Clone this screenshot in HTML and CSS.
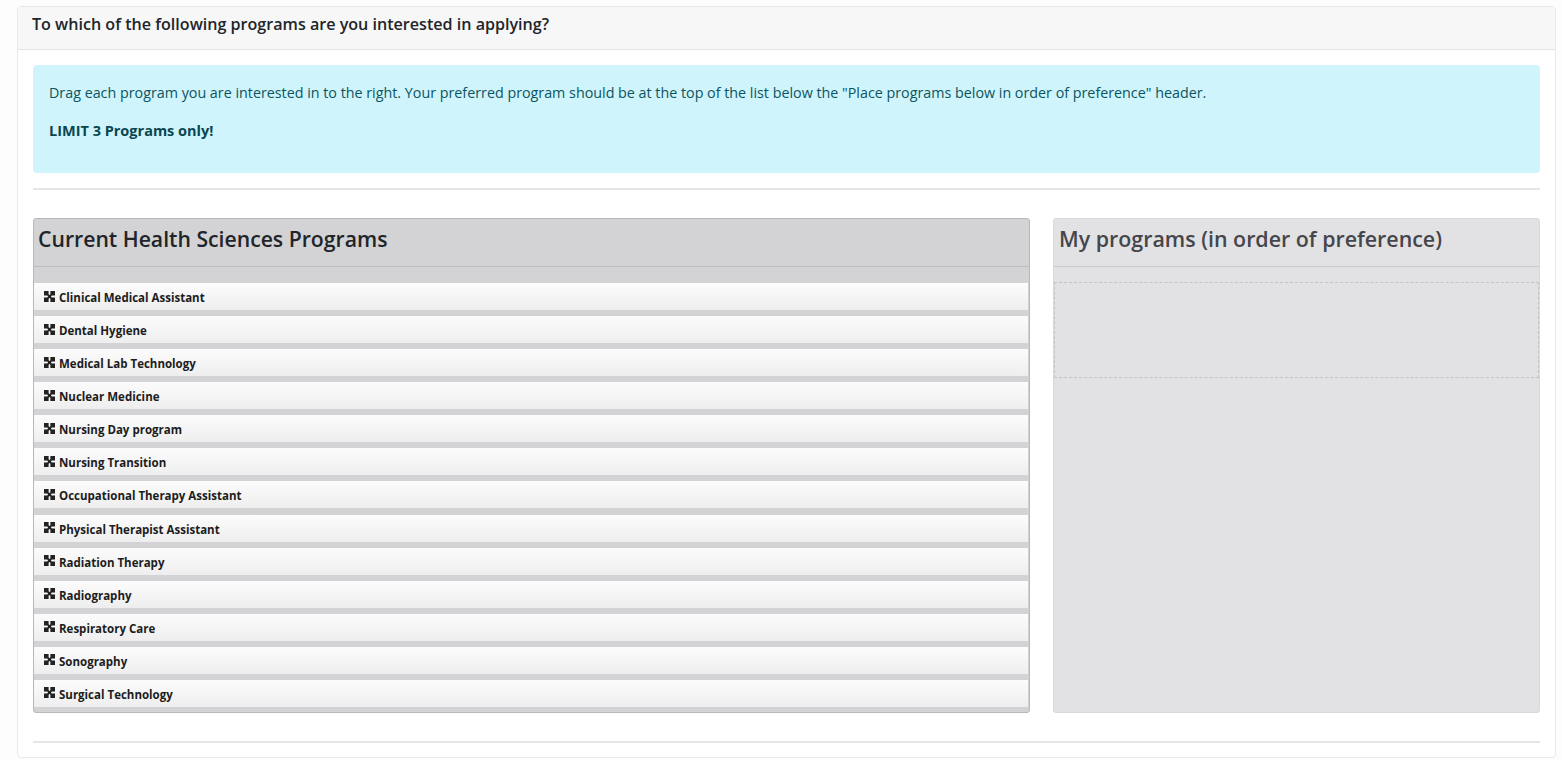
FILE: index.html
```html
<!DOCTYPE html>
<html lang="en">
<head>
  <meta charset="UTF-8" />
  <meta name="viewport" content="width=device-width, initial-scale=1.0" />
  <title>Program Selection</title>
  <link rel="stylesheet" href="styles.css">
</head>
<body>
  <svg class="icon-defs" width="0" height="0">
    <symbol id="move" viewBox="0 0 11 11">
      <path d="M0 0H4.6V3.200L5.500 4.100 6.400 3.200V0H11V4.600H7.800L6.900 5.500 7.800 6.400H11V11H6.400V7.800L5.500 6.900 4.600 7.800V11H0V6.400H3.200L4.100 5.500 3.200 4.600H0Z"/>
    </symbol>
  </svg>

  <div class="card">
    <div class="card-header">To which of the following programs are you interested in applying?</div>
    <div class="card-body">
      <div class="alert">
        <p>Drag each program you are interested in to the right. Your preferred program should be at the top of the list below the "Place programs below in order of preference" header.</p>
        <p><strong>LIMIT 3 Programs only!</strong></p>
      </div>
      <hr class="rule-top">

      <div class="columns">
        <div class="panel panel-source">
          <h4 class="panel-title">Current Health Sciences Programs</h4>
          <ul class="program-list">
            <li class="program"><svg class="move-icon"><use href="#move"/></svg>Clinical Medical Assistant</li>
            <li class="program"><svg class="move-icon"><use href="#move"/></svg>Dental Hygiene</li>
            <li class="program"><svg class="move-icon"><use href="#move"/></svg>Medical Lab Technology</li>
            <li class="program"><svg class="move-icon"><use href="#move"/></svg>Nuclear Medicine</li>
            <li class="program"><svg class="move-icon"><use href="#move"/></svg>Nursing Day program</li>
            <li class="program"><svg class="move-icon"><use href="#move"/></svg>Nursing Transition</li>
            <li class="program"><svg class="move-icon"><use href="#move"/></svg>Occupational Therapy Assistant</li>
            <li class="program"><svg class="move-icon"><use href="#move"/></svg>Physical Therapist Assistant</li>
            <li class="program"><svg class="move-icon"><use href="#move"/></svg>Radiation Therapy</li>
            <li class="program"><svg class="move-icon"><use href="#move"/></svg>Radiography</li>
            <li class="program"><svg class="move-icon"><use href="#move"/></svg>Respiratory Care</li>
            <li class="program"><svg class="move-icon"><use href="#move"/></svg>Sonography</li>
            <li class="program"><svg class="move-icon"><use href="#move"/></svg>Surgical Technology</li>
          </ul>
        </div>

        <div class="panel panel-target">
          <h4 class="panel-title">My programs (in order of preference)</h4>
          <div class="drop-zone"></div>
        </div>
      </div>

      <hr class="rule-bottom">
    </div>
  </div>
</body>
</html>
```

FILE: styles.css
```css
* {
  box-sizing: border-box;
}

body {
  margin: 0;
  padding: 6px 6px 0 17px;
  background-color: #fdfdfd;
  font-family: 'Open Sans', 'Noto Sans', sans-serif;
  color: #212529;
  overflow: hidden;
}

.icon-defs {
  position: absolute;
}

.card {
  height: 752px;
  background-color: #fff;
  border: 1px solid #e9e9e9;
  border-radius: 4px;
}

.card-header {
  height: 43px;
  padding: 6px 14px;
  background-color: #f7f7f7;
  border-bottom: 1px solid #e4e4e4;
  font-size: 16.1px;
  font-weight: 600;
  line-height: 22px;
}

.card-body {
  padding: 15px 15px 0;
}

.alert {
  height: 108px;
  padding: 17px 16px 16px;
  background-color: #cff4fc;
  border-radius: 4px;
  font-size: 14.3px;
  line-height: 22px;
  color: #0c5460;
}

.alert p {
  margin: 0 0 16px;
}

.alert strong {
  font-size: 14.5px;
  font-weight: 700;
  color: #0a4650;
}

.rule-top,
.rule-bottom {
  margin: 0;
  border: 0;
  border-top: 2px solid #e6e6e6;
}

.rule-top {
  margin-top: 15px;
}

.rule-bottom {
  margin-top: 28px;
}

.columns {
  display: grid;
  grid-template-columns: 997px 1fr;
  grid-template-rows: 495px;
  gap: 23px;
  margin-top: 28px;
}

.panel {
  border: 1px solid #d9d9db;
  border-radius: 3px;
  background-color: #e2e2e4;
}

.panel-source {
  border-color: #b8b8ba;
  background-color: #d3d3d5;
}

.panel-title {
  height: 48px;
  margin: 0;
  padding: 0 5px;
  border-bottom: 1px solid #bdbdbf;
  font-size: 21.2px;
  font-weight: 550;
  line-height: 39px;
}

.panel-source .panel-title {
  padding-left: 4px;
}

.panel-target .panel-title {
  font-size: 21.4px;
  color: #45464b;
  border-bottom-color: #cacacc;
}

.program-list {
  list-style: none;
  margin: 0;
  padding: 16px 0 0;
}

.program {
  display: flex;
  align-items: center;
  height: 27px;
  margin: 0 1px 6.09px 0;
  padding: 2px 0 0 10px;
  background: linear-gradient(#fcfcfc, #eeeeee);
  font-size: 11.5px;
  font-weight: 700;
  color: #1c1c1c;
}

.program:last-child {
  margin-bottom: 0;
}

.move-icon {
  width: 11px;
  height: 11px;
  margin: -3px 4px 0 0;
  fill: #222;
}

.drop-zone {
  height: 96px;
  margin-top: 15px;
  border: 1px dashed #c4c4c6;
}
```
